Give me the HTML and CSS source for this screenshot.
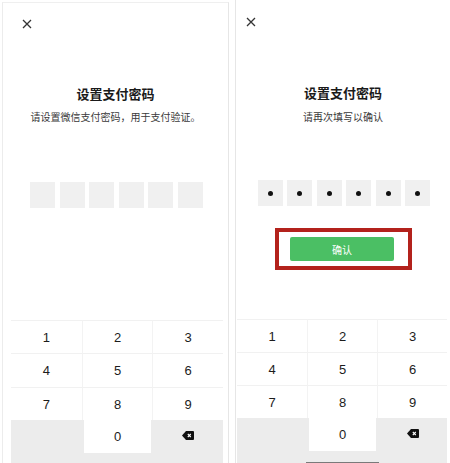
FILE: index.html
```html
<!DOCTYPE html>
<html lang="zh-CN">
<head>
<meta charset="utf-8">
<title>设置支付密码</title>
<link rel="stylesheet" href="styles.css">
</head>
<body>
<div class="page">
  <section class="phone phone-a">
    <div class="close-row">
      <svg class="close" viewBox="0 0 10 10" width="10" height="10"><path d="M1 1 L9 9 M9 1 L1 9" stroke="#333" stroke-width="1.3" fill="none"/></svg>
    </div>
    <h1 class="title">设置支付密码</h1>
    <p class="sub">请设置微信支付密码，用于支付验证。</p>
    <div class="pins">
      <div class="pin"></div><div class="pin"></div><div class="pin"></div>
      <div class="pin"></div><div class="pin"></div><div class="pin"></div>
    </div>
    <div class="keypad">
      <div class="key">1</div><div class="key">2</div><div class="key">3</div>
      <div class="key">4</div><div class="key">5</div><div class="key">6</div>
      <div class="key">7</div><div class="key">8</div><div class="key">9</div>
      <div class="key blank"></div><div class="key zero">0</div>
      <div class="key del"><svg viewBox="0 0 12 9" width="12" height="9"><path d="M4 0 H11 Q12 0 12 1 V8 Q12 9 11 9 H4 L0 4.5 Z" fill="#111"/><path d="M5.8 3 L8.8 6 M8.8 3 L5.8 6" stroke="#fff" stroke-width="1.1"/></svg></div>
      <div class="foot"></div>
    </div>
  </section>

  <section class="phone phone-b">
    <div class="close-row">
      <svg class="close" viewBox="0 0 10 10" width="10" height="10"><path d="M1 1 L9 9 M9 1 L1 9" stroke="#333" stroke-width="1.3" fill="none"/></svg>
    </div>
    <h1 class="title">设置支付密码</h1>
    <p class="sub">请再次填写以确认</p>
    <div class="pins">
      <div class="pin filled"></div><div class="pin filled"></div><div class="pin filled"></div>
      <div class="pin filled"></div><div class="pin filled"></div><div class="pin filled"></div>
    </div>
    <div class="highlight">
      <button class="confirm">确认</button>
    </div>
    <div class="keypad">
      <div class="key">1</div><div class="key">2</div><div class="key">3</div>
      <div class="key">4</div><div class="key">5</div><div class="key">6</div>
      <div class="key">7</div><div class="key">8</div><div class="key">9</div>
      <div class="key blank"></div><div class="key zero">0</div>
      <div class="key del"><svg viewBox="0 0 12 9" width="12" height="9"><path d="M4 0 H11 Q12 0 12 1 V8 Q12 9 11 9 H4 L0 4.5 Z" fill="#111"/><path d="M5.8 3 L8.8 6 M8.8 3 L5.8 6" stroke="#fff" stroke-width="1.1"/></svg></div>
      <div class="foot"><span class="home-bar"></span></div>
    </div>
  </section>
</div>
</body>
</html>
```

FILE: styles.css
```css
* { box-sizing: border-box; }
html, body {
  margin: 0;
  padding: 0;
  background: #fff;
}
body {
  font-family: "Noto Sans CJK SC", "Liberation Sans", sans-serif;
  color: #1a1a1a;
  width: 450px;
  height: 463px;
  overflow: hidden;
}
.page {
  display: flex;
  height: 463px;
}
.phone {
  display: flex;
  flex-direction: column;
  height: 100%;
  background: #fff;
  flex-shrink: 0;
}
.phone-a {
  width: 227px;
  margin-left: 2px;
  margin-top: 2px;
  height: 461px;
  border-left: 1px solid #ececec;
  border-right: 1px solid #e6e6e6;
  border-top: 1px solid #efefef;
}
.phone-b {
  width: 215px;
  margin-left: 6px;
  border-left: 1px solid #e6e6e6;
}
.close-row {
  display: flex;
}
.phone-a .close-row { padding: 16px 0 0 19px; }
.phone-b .close-row { padding: 17px 0 0 10px; }
.close { display: block; }

.title {
  margin: 56px 0 0;
  font-size: 13px;
  line-height: 18px;
  font-weight: 700;
  text-align: center;
  color: #1a1a1a;
}
.phone-b .title { margin-top: 57px; }
.sub {
  margin: 7px 0 0;
  font-size: 10px;
  line-height: 14px;
  text-align: center;
  color: #3a3a3a;
}
.phone-b .sub { margin-top: 8px; }

.pins {
  display: flex;
  justify-content: center;
  gap: 4.6px;
  margin-top: 58px;
}
.phone-a .pins { padding-left: 2px; }
.phone-b .pins { margin-top: 56px; gap: 4.5px; padding-left: 2px; }
.pin {
  width: 25px;
  height: 26px;
  background: #f0f0f0;
  display: flex;
  align-items: center;
  justify-content: center;
}
.pin.filled::after {
  content: "";
  width: 5px;
  height: 5px;
  border-radius: 50%;
  background: #111;
}

.highlight {
  align-self: flex-start;
  margin: 22px 0 0 39px;
  width: 137px;
  height: 42px;
  border: 4px solid #b3221c;
  padding: 5px 0 0 11px;
}
.confirm {
  display: block;
  width: 104px;
  height: 24px;
  border: none;
  border-radius: 2px;
  background: #4bbf64;
  color: #fff;
  font-family: "Noto Sans CJK SC", sans-serif;
  font-size: 10px;
  padding: 0;
}

.keypad {
  margin-top: auto;
  display: grid;
  grid-template-columns: 1fr 1fr 1fr;
  grid-template-rows: 33px 34px 33px 33px 10px;
  font-family: "Liberation Sans", Arial, sans-serif;
}
.phone-a .keypad { margin-left: 8px; margin-right: 5px; }
.phone-b .keypad {
  margin-left: 1px;
  margin-right: 3px;
  grid-template-rows: 33px 33px 33px 33px 12px;
}
.key {
  display: flex;
  align-items: center;
  justify-content: center;
  font-size: 13px;
  color: #1c1c1c;
  background: #fff;
  border-top: 1px solid #f1f1f1;
}
.key:nth-child(3n+2), .key:nth-child(3n) {
  border-left: 1px solid #f3f3f3;
}
.key.blank, .key.del {
  background: #ececec;
  border-color: #ececec;
}
.key.zero {
  border-top: none;
  border-left: 2px solid #ececec;
  border-right: 1px solid #ececec;
}
.key.del svg { display: block; margin-top: -4px; }
.foot {
  grid-column: 1 / -1;
  background: #ececec;
  display: flex;
  justify-content: center;
  align-items: flex-end;
}
.home-bar {
  width: 73px;
  height: 1px;
  background: #7a7a7a;
}
```
